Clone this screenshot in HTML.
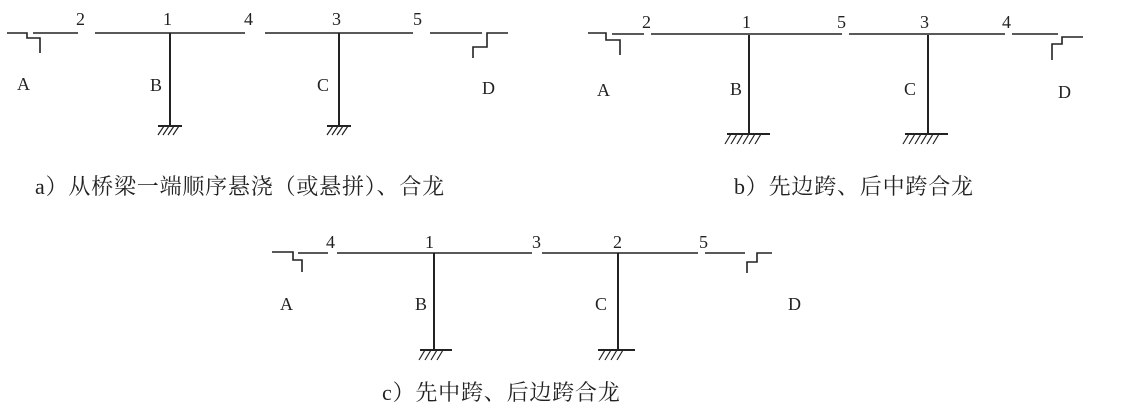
<!DOCTYPE html>
<html><head><meta charset="utf-8"><style>
html,body{margin:0;padding:0;background:#fff;}
svg{display:block}
text{font-family:"Liberation Serif","Noto Serif CJK SC",serif;fill:#222}
.l{font-size:18px}
.cap{font-size:22px;letter-spacing:0.8px}
</style></head><body>
<svg width="1141" height="411" viewBox="0 0 1141 411" xmlns="http://www.w3.org/2000/svg">
<g stroke="#222" stroke-width="1.6" fill="none">
<path d="M7 33H27V38H40V53"/>
<path d="M33 33H78M95 33H245M265 33H413M430 33H482"/>
<path d="M473 58V47H487V33H508"/>
<path d="M170 33V126M158 126H182M339 33V126M327 126H351" stroke-width="2"/>
<path d="M158 135l6-9M163 135l6-9M168 135l6-9M173 135l6-9M327 135l6-9M332 135l6-9M337 135l6-9M342 135l6-9" stroke-width="1.2"/>
<path d="M588 33H606V40H620V55"/>
<path d="M612 34H644M651 34H842M849 34H1005M1012 34H1058"/>
<path d="M1052 60V44H1062V37H1083"/>
<path d="M749 35V134M727 134H770M928 35V134M905 134H948" stroke-width="2"/>
<path d="M725 144l6-10M731 144l6-10M737 144l6-10M743 144l6-10M749 144l6-10M755 144l6-10M903 144l6-10M909 144l6-10M915 144l6-10M921 144l6-10M927 144l6-10M933 144l6-10" stroke-width="1.2"/>
<path d="M272 252H293V260H302V272"/>
<path d="M298 253H328M337 253H532M542 253H698M705 253H745"/>
<path d="M747 273V262H757V253H772"/>
<path d="M434 253V350M420 350H452M618 253V350M598 350H635" stroke-width="2"/>
<path d="M419 360l6-10M425 360l6-10M431 360l6-10M437 360l6-10M599 360l6-10M605 360l6-10M611 360l6-10M617 360l6-10" stroke-width="1.2"/>
</g>
<g class="l">
<text x="76" y="25">2</text><text x="163" y="25">1</text><text x="244" y="25">4</text><text x="332" y="25">3</text><text x="413" y="25">5</text>
<text x="17" y="90">A</text><text x="150" y="91">B</text><text x="317" y="91">C</text><text x="482" y="94">D</text>
<text x="642" y="28">2</text><text x="742" y="28">1</text><text x="837" y="28">5</text><text x="920" y="28">3</text><text x="1002" y="28">4</text>
<text x="597" y="96">A</text><text x="730" y="95">B</text><text x="904" y="95">C</text><text x="1058" y="98">D</text>
<text x="326" y="248">4</text><text x="425" y="248">1</text><text x="532" y="248">3</text><text x="613" y="248">2</text><text x="699" y="248">5</text>
<text x="280" y="310">A</text><text x="415" y="310">B</text><text x="595" y="310">C</text><text x="788" y="310">D</text>
</g>
<text class="cap" x="35" y="194">a）从桥梁一端顺序悬浇（或悬拼）、合龙</text>
<text class="cap" x="734" y="194">b）先边跨、后中跨合龙</text>
<text class="cap" x="382" y="400">c）先中跨、后边跨合龙</text>
</svg>
</body></html>
